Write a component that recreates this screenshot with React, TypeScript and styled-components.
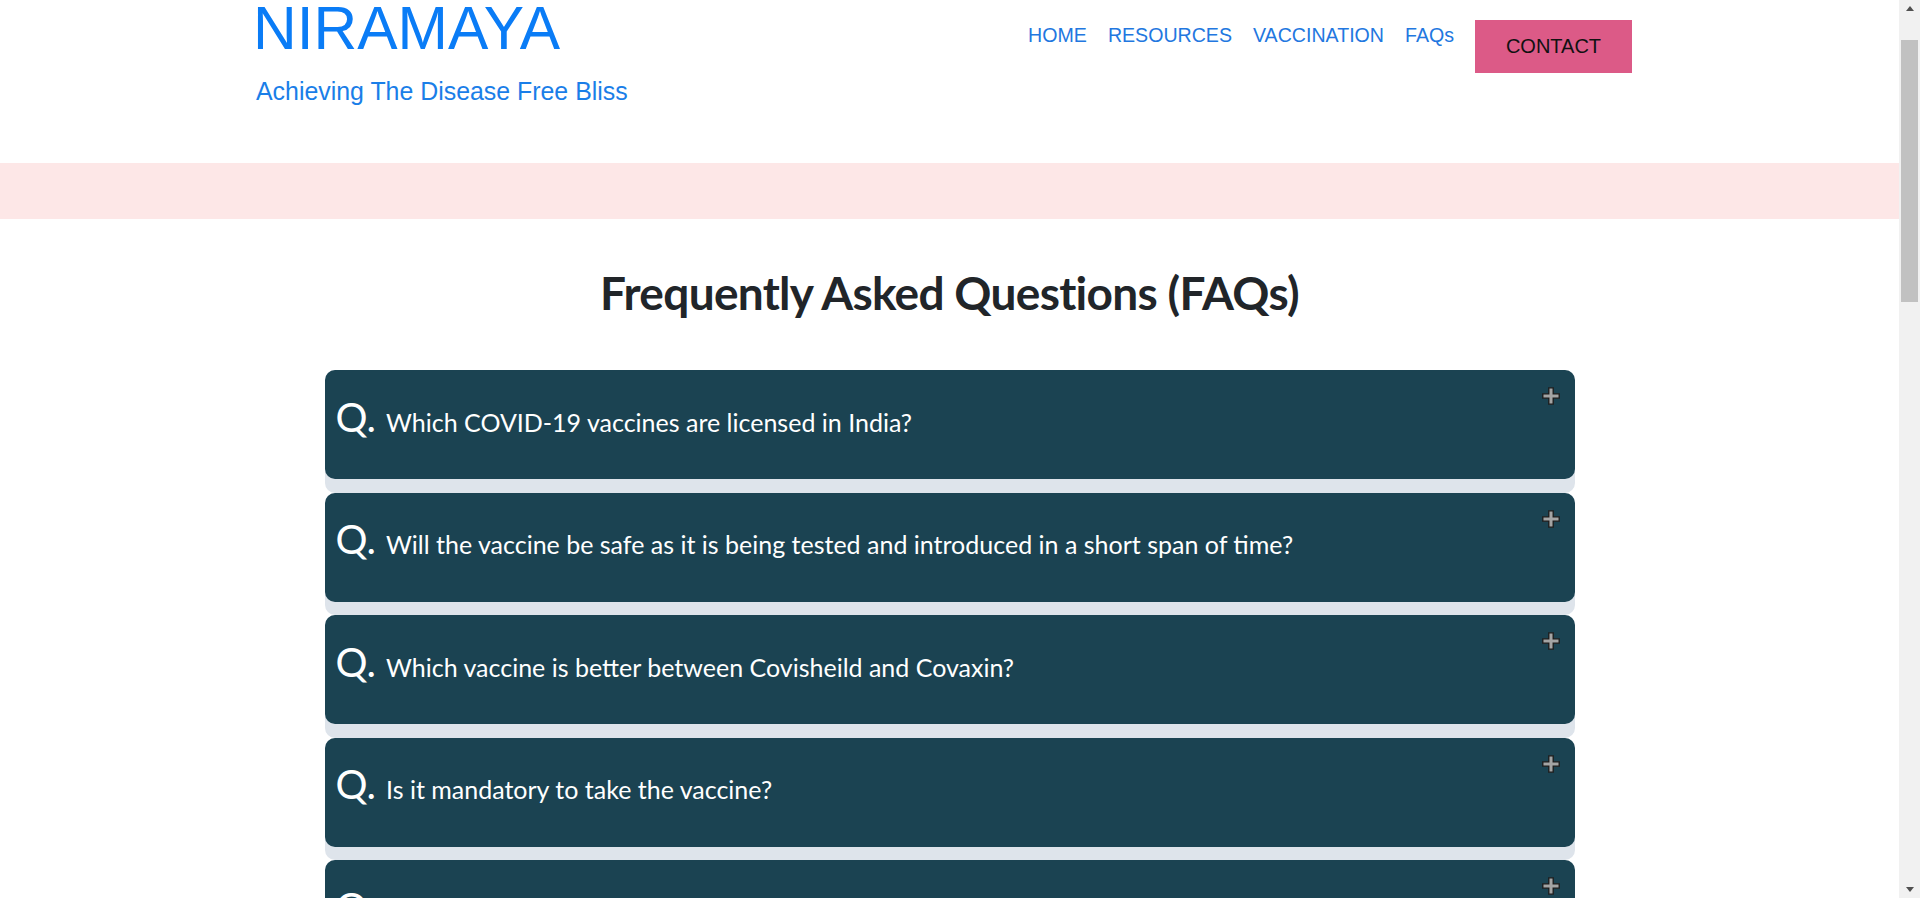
import React, { useEffect, useState } from 'react';
import styled, { createGlobalStyle } from 'styled-components';

const SCROLL_OFFSET = 79;
const RAIL_WIDTH = 21;

const GlobalStyle = createGlobalStyle`
  html, body {
    margin: 0;
    padding: 0;
    background: #ffffff;
  }
  body {
    font-family: "Liberation Sans", Arial, sans-serif;
  }
  *, *::before, *::after {
    box-sizing: border-box;
  }
`;

const Page = styled.div`
  margin-right: ${RAIL_WIDTH}px;
  display: flex;
  flex-direction: column;
  min-height: 2961px;
`;

const Header = styled.header`
  height: ${SCROLL_OFFSET + 163}px;
  padding: ${SCROLL_OFFSET - 2.5}px 267px 0 253px;
  display: flex;
  justify-content: space-between;
  align-items: flex-start;
`;

const Brand = styled.div`
  display: flex;
  flex-direction: column;
`;

const Logo = styled.div`
  font-family: "Liberation Sans", Arial, sans-serif;
  font-size: 60.5px;
  line-height: 60px;
  color: #0a7cf6;
`;

const Tagline = styled.div`
  margin-top: 19.5px;
  padding-left: 3px;
  font-family: "Liberation Sans", Arial, sans-serif;
  font-size: 24.9px;
  color: #1a7ee8;
`;

const Nav = styled.nav`
  margin-top: 22px;
  display: flex;
  align-items: flex-start;
  gap: 21px;
`;

const NavLink = styled.a`
  margin-top: 4px;
  font-size: 19.6px;
  color: #2277e0;
  text-decoration: none;
  cursor: pointer;
`;

const ContactButton = styled.button`
  height: 53px;
  width: 157px;
  border: none;
  background: #dc5a87;
  color: #111111;
  font-family: "Liberation Sans", Arial, sans-serif;
  font-size: 20px;
  cursor: pointer;
`;

const Band = styled.div`
  height: 56px;
  background: #fde7e7;
`;

const FaqSection = styled.section`
  display: flex;
  flex-direction: column;
  align-items: center;
  padding: 46px 0 80px;
`;

const Title = styled.h1`
  margin: 0 0 50px;
  font-family: Lato, "Open Sans", sans-serif;
  font-weight: 700;
  font-size: 46px;
  letter-spacing: -0.7px;
  line-height: 1.2;
  color: #212529;
`;

const List = styled.div`
  width: 1250px;
  display: flex;
  flex-direction: column;
`;

const Item = styled.div`
  background: #dee4eb;
  border-radius: 10px;
  padding-bottom: 13.5px;
`;

const Question = styled.div`
  height: 109px;
  background: #1b4352;
  border-radius: 10px;
  padding: 26.5px 15px 0 11px;
  display: flex;
  justify-content: space-between;
  align-items: flex-start;
  cursor: pointer;
`;

const QLine = styled.div`
  display: flex;
  align-items: baseline;
  gap: 10px;
  color: #ffffff;
  font-family: Lato, "Open Sans", sans-serif;
`;

const QMark = styled.span`
  font-size: 40px;
  line-height: 1;
`;

const QText = styled.span`
  font-size: 25px;
  line-height: 1.2;
`;

const Toggle = styled.span`
  margin-top: -9.5px;
  width: 18px;
  height: 18px;
  display: flex;
`;

const Answer = styled.div`
  padding: 16px 24px 4px;
  font-family: Lato, "Open Sans", sans-serif;
  font-size: 20px;
  line-height: 1.5;
  color: #1b4352;
`;

const Footer = styled.footer`
  margin-top: auto;
  padding: 40px 0;
  background: #1b4352;
  color: #ffffff;
  text-align: center;
  font-family: Lato, "Open Sans", sans-serif;
  font-size: 18px;
`;

/* Classic window scrollbar drawn over the right edge (headless browser hides the real one). */
const Rail = styled.div`
  position: fixed;
  top: 0;
  right: 0;
  bottom: 0;
  width: ${RAIL_WIDTH}px;
  background: #f1f1f1;
  display: flex;
  flex-direction: column;
  align-items: center;
`;

const RailArrow = styled.div`
  height: 17px;
  width: 100%;
  display: flex;
  align-items: center;
  justify-content: center;
`;

const RailTrack = styled.div`
  flex: 1;
  width: 100%;
  padding: 23px 2px 0;
`;

const RailThumb = styled.div`
  height: 262px;
  background: #c1c1c1;
`;

const faqs: { q: string; a: string }[] = [
  { q: 'Which COVID-19 vaccines are licensed in India?', a: 'Covishield and Covaxin have been granted emergency use authorization in India.' },
  { q: 'Will the vaccine be safe as it is being tested and introduced in a short span of time?', a: 'Vaccines are introduced only after regulatory bodies clear them based on their safety and efficacy.' },
  { q: 'Which vaccine is better between Covisheild and Covaxin?', a: 'Both vaccines are safe and effective. Take whichever is available to you.' },
  { q: 'Is it mandatory to take the vaccine?', a: 'Vaccination is voluntary, but it is advisable to receive the complete schedule.' },
  { q: 'Is it necessary for a COVID recovered person to take the vaccine?', a: 'Yes, it is advisable to receive the complete schedule irrespective of past infection.' },
  { q: 'Can a person presently having COVID-19 infection be vaccinated?', a: 'Such a person should defer vaccination until 14 days after symptoms resolve.' },
  { q: 'How will I know if I am eligible for vaccination?', a: 'Eligible beneficiaries are informed through their registered mobile number.' },
  { q: 'Can a person get the vaccine without registration with Health Department?', a: 'Registration is mandatory. Only registered beneficiaries are vaccinated.' },
  { q: 'What documents are required for registration of eligible beneficiary?', a: 'Any one of the listed photo ID documents may be produced at registration.' },
  { q: 'Will the beneficiary receive information on due date of vaccination?', a: 'Yes, an SMS is sent to the registered mobile number.' },
  { q: 'Can a person with diabetes, hypertension or cancer take the vaccine?', a: 'Yes. Persons with co-morbid conditions are in the high risk category.' },
  { q: 'What are the possible side effects of the vaccine?', a: 'Mild fever, pain at the injection site and body ache may occur.' },
  { q: 'How many doses of the vaccine would have to be taken and at what interval?', a: 'Two doses have to be taken, at the interval advised for each vaccine.' },
  { q: 'When would antibodies develop?', a: 'Protective levels generally develop two weeks after the second dose.' },
  { q: 'Should I continue to follow COVID appropriate behaviour after vaccination?', a: 'Yes, wear a mask, keep distance and maintain hand hygiene.' },
];

const PlusIcon = () => (
  <svg width="18" height="18" viewBox="0 0 18 18" aria-hidden="true">
    <polygon
      points="6.8,0.8 11.2,0.8 11.2,6.8 17.2,6.8 17.2,11.2 11.2,11.2 11.2,17.2 6.8,17.2 6.8,11.2 0.8,11.2 0.8,6.8 6.8,6.8"
      fill="#a4a4a4"
      stroke="#1a1a1a"
      strokeWidth="1.3"
      strokeLinejoin="miter"
    />
  </svg>
);

const MinusIcon = () => (
  <svg width="18" height="18" viewBox="0 0 18 18" aria-hidden="true">
    <rect x="0.8" y="6.8" width="16.4" height="4.4" fill="#a4a4a4" stroke="#1a1a1a" strokeWidth="1.3" />
  </svg>
);

const ArrowIcon = ({ down }: { down?: boolean }) => (
  <svg width="8" height="5" viewBox="0 0 8 5" aria-hidden="true">
    <polygon points={down ? '0,0 8,0 4,5' : '0,5 8,5 4,0'} fill="#505050" />
  </svg>
);

export default function App() {
  const [open, setOpen] = useState<number | null>(null);

  useEffect(() => {
    window.scrollTo(0, SCROLL_OFFSET);
    const id = requestAnimationFrame(() => window.scrollTo(0, SCROLL_OFFSET));
    return () => cancelAnimationFrame(id);
  }, []);

  return (
    <>
      <GlobalStyle />
      <Page>
        <Header>
          <Brand>
            <Logo>NIRAMAYA</Logo>
            <Tagline>Achieving The Disease Free Bliss</Tagline>
          </Brand>
          <Nav>
            <NavLink>HOME</NavLink>
            <NavLink>RESOURCES</NavLink>
            <NavLink>VACCINATION</NavLink>
            <NavLink>FAQs</NavLink>
            <ContactButton>CONTACT</ContactButton>
          </Nav>
        </Header>
        <Band />
        <FaqSection>
          <Title>Frequently Asked Questions (FAQs)</Title>
          <List>
            {faqs.map((f, i) => (
              <Item key={i}>
                <Question onClick={() => setOpen(open === i ? null : i)}>
                  <QLine>
                    <QMark>Q.</QMark>
                    <QText>{f.q}</QText>
                  </QLine>
                  <Toggle>{open === i ? <MinusIcon /> : <PlusIcon />}</Toggle>
                </Question>
                {open === i && <Answer>{f.a}</Answer>}
              </Item>
            ))}
          </List>
        </FaqSection>
        <Footer>© 2021 Niramaya. Achieving The Disease Free Bliss.</Footer>
      </Page>
      <Rail>
        <RailArrow>
          <ArrowIcon />
        </RailArrow>
        <RailTrack>
          <RailThumb />
        </RailTrack>
        <RailArrow>
          <ArrowIcon down />
        </RailArrow>
      </Rail>
    </>
  );
}
